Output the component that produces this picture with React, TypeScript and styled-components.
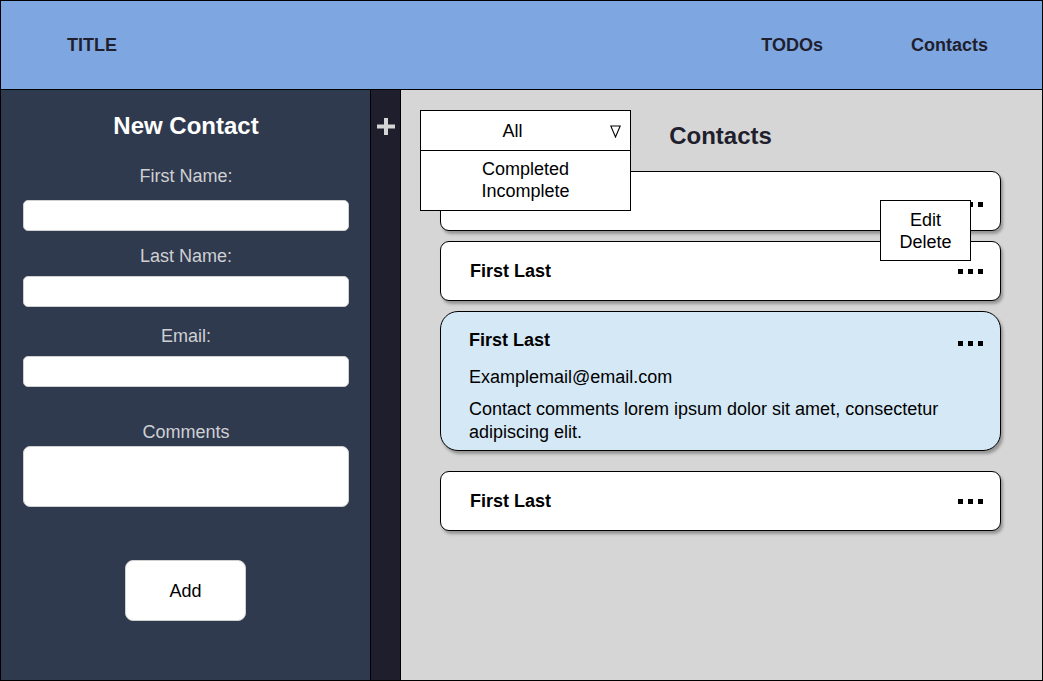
import React from "react";
import styled, { createGlobalStyle } from "styled-components";

const GlobalStyle = createGlobalStyle`
  html, body { margin: 0; padding: 0; }
  body { font-family: "Liberation Sans", Arial, Helvetica, sans-serif; background: #fff; }
  * { box-sizing: border-box; }
`;

const Frame = styled.div`
  width: 1043px;
  height: 681px;
  border: 1px solid #000;
  display: flex;
  flex-direction: column;
  overflow: hidden;
`;

const Header = styled.header`
  height: 89px;
  flex: none;
  display: flex;
  align-items: center;
  padding: 0 54px 0 66px;
  background: #7ea6e0;
  border-bottom: 1px solid #000;
  color: #1f1f2e;
  font-size: 18px;
  font-weight: 700;
`;

const Brand = styled.div`
  flex: 1;
`;

const Nav = styled.nav`
  display: flex;
  gap: 88px;
`;

const NavLink = styled.span``;

const Body = styled.div`
  flex: 1;
  display: flex;
  min-height: 0;
`;

const Sidebar = styled.aside`
  width: 370px;
  flex: none;
  background: #303a4e;
  border-right: 1px solid #000;
  padding: 22px 21px 0 22px;
  display: flex;
  flex-direction: column;
`;

const SideTitle = styled.h2`
  margin: 0;
  font-size: 24px;
  line-height: 28px;
  font-weight: 700;
  color: #fff;
  text-align: center;
`;

const Field = styled.div<{ $top: number }>`
  display: flex;
  flex-direction: column;
  margin-top: ${(p) => p.$top}px;
`;

const Label = styled.label<{ $below: number }>`
  font-size: 18px;
  line-height: 20px;
  color: #cfd0d3;
  text-align: center;
  margin-bottom: ${(p) => p.$below}px;
`;

const Input = styled.div<{ $tall?: boolean }>`
  height: ${(p) => (p.$tall ? 61 : 31)}px;
  background: #fff;
  border: 1px solid #d0d0d0;
  border-radius: ${(p) => (p.$tall ? 7 : 5)}px;
`;

const AddButton = styled.button`
  align-self: center;
  margin-top: 53px;
  margin-left: -1px;
  width: 121px;
  height: 61px;
  padding-top: 2px;
  background: #fff;
  border: 1px solid #d0d0d0;
  border-radius: 8px;
  font-family: inherit;
  font-size: 18px;
  color: #000;
`;

const Strip = styled.div`
  width: 30px;
  flex: none;
  background: #1e1e2d;
  border-right: 1px solid #000;
  display: flex;
  justify-content: center;
  padding-top: 28px;
  padding-left: 1px;
`;

const Main = styled.main`
  flex: 1;
  position: relative;
  background: #d6d6d6;
  padding-top: 32px;
`;

const Heading = styled.h1`
  margin: 0 0 21px -2px;
  font-size: 24px;
  line-height: 28px;
  font-weight: 700;
  color: #1f1f2e;
  text-align: center;
`;

const List = styled.div`
  display: flex;
  flex-direction: column;
  gap: 10px;
  padding: 0 41px 0 39px;
`;

const Card = styled.div<{ $expanded?: boolean }>`
  position: relative;
  background: ${(p) => (p.$expanded ? "#d5e8f6" : "#fff")};
  border: 1px solid #000;
  border-radius: ${(p) => (p.$expanded ? 18 : 9)}px;
  box-shadow: 2px 3px 3px rgba(0, 0, 0, 0.3);
  padding: ${(p) => (p.$expanded ? "17px 17px 6px 28px" : "0 17px 0 29px")};
  height: ${(p) => (p.$expanded ? "auto" : "60px")};
  margin-bottom: ${(p) => (p.$expanded ? 10 : 0)}px;
  display: flex;
  flex-direction: column;
  justify-content: center;
  color: #000;
`;

const CardHead = styled.div`
  display: flex;
  align-items: center;
  justify-content: space-between;
`;

const Name = styled.div`
  font-size: 18px;
  line-height: 22px;
  font-weight: 700;
`;

const Dots = styled.div<{ $shift: number }>`
  display: flex;
  gap: 5px;
  margin-top: ${(p) => p.$shift}px;
`;

const Dot = styled.span`
  width: 5px;
  height: 5px;
  background: #000;
`;

const Email = styled.div`
  margin-top: 15px;
  font-size: 18px;
  line-height: 22px;
`;

const Comment = styled.div`
  margin-top: 10px;
  font-size: 18px;
  line-height: 23px;
  padding-right: 40px;
`;

const Dropdown = styled.div`
  position: absolute;
  top: 20px;
  left: 19px;
  width: 211px;
  height: 101px;
  background: #fff;
  border: 1px solid #000;
  z-index: 5;
  font-size: 18px;
  color: #000;
`;

const DropTop = styled.div`
  height: 40px;
  border-bottom: 1px solid #000;
  display: flex;
  align-items: center;
  padding-top: 1px;
  padding-right: 9px;
  gap: 6px;
`;

const DropValue = styled.span`
  flex: 1;
  text-align: center;
`;

const DropItems = styled.div`
  padding-top: 7px;
  line-height: 22px;
  text-align: center;
`;

const Menu = styled.div`
  position: absolute;
  left: 439px;
  top: 28px;
  width: 91px;
  height: 61px;
  background: #fff;
  border: 1px solid #000;
  z-index: 5;
  padding-top: 8px;
  font-size: 18px;
  line-height: 22px;
  text-align: center;
  color: #000;
`;

const Plus = () => (
  <svg width="18" height="17" viewBox="0 0 18 17">
    <rect x="7" y="0" width="4" height="17" fill="#d5d5d5" />
    <rect x="0" y="6.5" width="18" height="4" fill="#d5d5d5" />
  </svg>
);

const Caret = () => (
  <svg width="11" height="13" viewBox="0 0 11 13">
    <polygon points="0.8,1 10.2,1 5.5,12" fill="none" stroke="#000" strokeWidth="1.1" />
  </svg>
);

const More = ({ shift = 0 }: { shift?: number }) => (
  <Dots $shift={shift}>
    <Dot />
    <Dot />
    <Dot />
  </Dots>
);

export default function App() {
  return (
    <>
      <GlobalStyle />
      <Frame>
        <Header>
          <Brand>TITLE</Brand>
          <Nav>
            <NavLink>TODOs</NavLink>
            <NavLink>Contacts</NavLink>
          </Nav>
        </Header>
        <Body>
          <Sidebar>
            <SideTitle>New Contact</SideTitle>
            <Field $top={26}>
              <Label $below={14}>First Name:</Label>
              <Input />
            </Field>
            <Field $top={15}>
              <Label $below={10}>Last Name:</Label>
              <Input />
            </Field>
            <Field $top={19}>
              <Label $below={10}>Email:</Label>
              <Input />
            </Field>
            <Field $top={35}>
              <Label $below={4}>Comments</Label>
              <Input $tall />
            </Field>
            <AddButton>Add</AddButton>
          </Sidebar>
          <Strip>
            <Plus />
          </Strip>
          <Main>
            <Dropdown>
              <DropTop>
                <DropValue>All</DropValue>
                <Caret />
              </DropTop>
              <DropItems>
                <div>Completed</div>
                <div>Incomplete</div>
              </DropItems>
            </Dropdown>
            <Heading>Contacts</Heading>
            <List>
              <Card>
                <CardHead>
                  <Name />
                  <More shift={6} />
                </CardHead>
                <Menu>
                  <div>Edit</div>
                  <div>Delete</div>
                </Menu>
              </Card>
              <Card>
                <CardHead>
                  <Name>First Last</Name>
                  <More />
                </CardHead>
              </Card>
              <Card $expanded>
                <CardHead>
                  <Name>First Last</Name>
                  <More shift={6} />
                </CardHead>
                <Email>Examplemail@email.com</Email>
                <Comment>
                  Contact comments lorem ipsum dolor sit amet, consectetur adipiscing elit.
                </Comment>
              </Card>
              <Card>
                <CardHead>
                  <Name>First Last</Name>
                  <More />
                </CardHead>
              </Card>
            </List>
          </Main>
        </Body>
      </Frame>
    </>
  );
}
